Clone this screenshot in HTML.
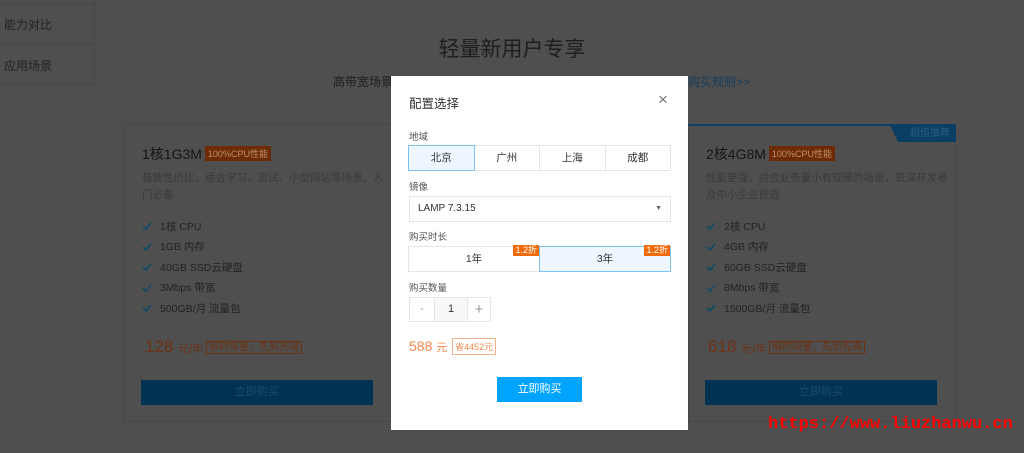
<!DOCTYPE html>
<html><head><meta charset="utf-8"><style>
*{margin:0;padding:0;box-sizing:border-box}
body{width:1024px;height:453px;overflow:hidden;background:#4f4f4f;font-family:"Liberation Sans","Noto Sans CJK SC",sans-serif;position:relative;color:#1a1a1a}
.a{position:absolute}
.side{left:0;width:95px;border:1px solid #474747;border-left:none;font-size:12px;color:#222;padding-left:4px;height:40px;line-height:40px}
.card{border:1px solid #474747;top:124px;height:298px}
.t{font-size:14px;color:#151515}
.tag{display:inline-block;background:#6e2c06;color:#c09070;font-size:9px;padding:1px 3px;margin-left:3px;vertical-align:2px}
.desc{font-size:10.5px;color:#3a3a3a;line-height:17px}
.li{font-size:10.5px;color:#222;height:20.5px;display:flex;align-items:center}
.li svg{margin-right:8px}
.price{font-size:17px;color:#6e3112}
.price s{text-decoration:none;font-size:11px}
.box{border:1px solid #6e3112;font-size:10px;padding:0 2px;color:#6e3112;margin-left:3px;vertical-align:2px}
.btn{background:#003352;color:#1d4b6c;font-size:11px;text-align:center;height:25px;line-height:25px}
.m{left:391px;top:76px;width:297px;height:354px;background:#fff}
.lab{font-size:9.5px;color:#555;left:18px}
.seg{display:flex;left:18px;width:262px;height:26px}
.seg div{flex:1;border:1px solid #e5e5e5;font-size:10.5px;text-align:center;line-height:24px;color:#333;margin-left:-1px}
.seg .on{border-color:#7cc4f5;background:#eef7ff;position:relative;z-index:1}
.badge{position:absolute;right:0;top:-2px;background:#f26b0a;color:#fff;font-size:9px;line-height:11px;padding:0 2px}
</style></head><body>
<svg width="0" height="0" style="position:absolute"><symbol id="ck" viewBox="0 0 10 8"><path d="M1 4l3 3 5-6" fill="none" stroke="#0a4a6a" stroke-width="1.5"/></symbol></svg>
<div class="a side" style="top:4px">能力对比</div>
<div class="a side" style="top:45px">应用场景</div>
<div class="a" style="left:0;top:-1px;width:95px;height:6px;border-bottom:1px solid #474747;border-right:1px solid #474747"></div>
<div class="a" style="left:0;top:33px;width:1024px;text-align:center;font-size:21px;color:#1e1e1e">轻量新用户专享</div>
<div class="a" style="left:333px;top:73px;font-size:12px;color:#1e1e1e">高带宽场景</div>
<div class="a" style="left:688px;top:73px;font-size:12px;color:#153d5c">购买规则>></div>

<div class="a card" style="left:123px;width:270px"></div>
<div class="a" style="left:142px;top:144px"><span class="t">1核1G3M</span><span class="tag">100%CPU性能</span></div>
<div class="a desc" style="left:142px;top:170px;width:245px">极致性价比，适合学习、测试、小型网站等场景，入门必备</div>
<div class="a" style="left:142px;top:216px">
<div class="li"><svg width="10" height="8"><use href="#ck"/></svg>1核 CPU</div><div class="li"><svg width="10" height="8"><use href="#ck"/></svg>1GB 内存</div><div class="li"><svg width="10" height="8"><use href="#ck"/></svg>40GB SSD云硬盘</div><div class="li"><svg width="10" height="8"><use href="#ck"/></svg>3Mbps 带宽</div><div class="li"><svg width="10" height="8"><use href="#ck"/></svg>500GB/月 流量包</div></div>
<div class="a price" style="left:145px;top:337px">128 <s>元/年</s><span class="box">限时限量，先到先得</span></div>
<div class="a btn" style="left:141px;top:380px;width:232px">立即购买</div>

<div class="a card" style="left:688px;width:268px;border-top:2px solid #0a3f63"></div>
<div class="a" style="left:890px;top:125px;width:66px;height:17px;background:#0a3f63;clip-path:polygon(0 0,100% 0,100% 100%,8px 100%);color:#2b5f80;font-size:10px;text-align:right;padding-right:6px;line-height:17px">超值推荐</div>
<div class="a" style="left:706px;top:144px"><span class="t">2核4G8M</span><span class="tag">100%CPU性能</span></div>
<div class="a desc" style="left:706px;top:170px;width:245px">性能更强，适合业务量小有规模的场景，资深开发者及中小企业首选</div>
<div class="a" style="left:706px;top:216px">
<div class="li"><svg width="10" height="8"><use href="#ck"/></svg>2核 CPU</div><div class="li"><svg width="10" height="8"><use href="#ck"/></svg>4GB 内存</div><div class="li"><svg width="10" height="8"><use href="#ck"/></svg>60GB SSD云硬盘</div><div class="li"><svg width="10" height="8"><use href="#ck"/></svg>8Mbps 带宽</div><div class="li"><svg width="10" height="8"><use href="#ck"/></svg>1500GB/月 流量包</div></div>
<div class="a price" style="left:708px;top:337px">618 <s>元/年</s><span class="box">限时限量，先到先得</span></div>
<div class="a btn" style="left:705px;top:380px;width:232px">立即购买</div>
<div class="a" style="left:768px;top:415px;font-family:'Liberation Mono',monospace;font-size:17px;color:#f00;font-weight:bold">https://www.liuzhanwu.cn</div>

<div class="a m">
<div class="a" style="left:18px;top:17px;font-size:12.5px;color:#333">配置选择</div>
<div class="a" style="left:267px;top:14px;font-size:17px;color:#777">×</div>
<div class="a lab" style="top:53px">地域</div>
<div class="a seg" style="top:69px"><div class="on">北京</div><div>广州</div><div>上海</div><div>成都</div></div>
<div class="a lab" style="top:103px">镜像</div>
<div class="a" style="left:18px;top:120px;width:262px;height:26px;border:1px solid #e5e5e5;font-size:10px;line-height:24px;padding-left:8px;color:#333">LAMP 7.3.15<span style="position:absolute;right:8px;font-size:7px;color:#666">▼</span></div>
<div class="a lab" style="top:153px">购买时长</div>
<div class="a seg" style="top:170px"><div style="position:relative">1年<span class="badge">1.2折</span></div><div class="on">3年<span class="badge">1.2折</span></div></div>
<div class="a lab" style="top:204px">购买数量</div>
<div class="a" style="left:18px;top:221px;width:82px;height:25px;border:1px solid #e5e5e5;display:flex;font-size:11px;color:#999">
<div style="width:24px;text-align:center;line-height:23px">-</div><div style="width:34px;text-align:center;line-height:23px;border-left:1px solid #e5e5e5;border-right:1px solid #e5e5e5;background:#f8f8f8;color:#333">1</div><div style="width:22px;text-align:center;line-height:23px;font-size:15px">+</div></div>
<div class="a" style="left:18px;top:262px;font-size:14px;color:#f5884a">588 <span style="font-size:11px">元</span></div>
<div class="a" style="left:61px;top:262px;border:1px solid #f5b08a;font-size:9px;color:#f5884a;padding:1px 2px">省4452元</div>
<div class="a" style="left:106px;top:301px;width:85px;height:25px;background:#00a4ff;color:#fff;font-size:11px;text-align:center;line-height:25px">立即购买</div>
</div>
</body></html>
